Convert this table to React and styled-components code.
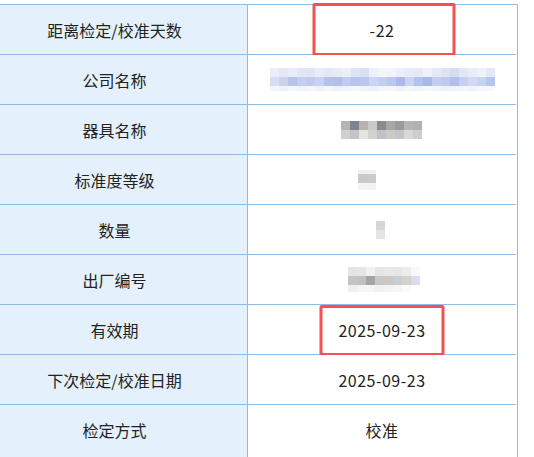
import React from "react";
import styled, { createGlobalStyle } from "styled-components";

const GlobalStyle = createGlobalStyle`
  html, body {
    margin: 0;
    padding: 0;
    background: #ffffff;
    overflow: hidden;
  }
  body {
    font-family: "Noto Sans CJK SC", "Noto Sans", sans-serif;
    color: #222;
  }
`;

const Page = styled.div`
  padding-top: 4px;
`;

const Table = styled.div`
  width: 535px;
  margin-left: -18px;
  border-top: 1px solid #8fbbe4;
  border-right: 1px solid #8fbbe4;
`;

const Row = styled.div`
  display: grid;
  grid-template-columns: 266px 268px;
`;

const Cell = styled.div`
  position: relative;
  display: flex;
  align-items: center;
  justify-content: center;
  height: 49px;
  font-size: 16px;
  line-height: 1;
  border-bottom: ${({ $last }) => ($last ? "none" : "1px solid #8fbbe4")};
  padding-bottom: ${({ $last }) => ($last ? "4px" : "0")};
`;

const Label = styled(Cell)`
  background: #e4f1fc;
  border-right: 1px solid #8fbbe4;
`;

const Value = styled(Cell)`
  background: #ffffff;
  letter-spacing: 0.5px;
`;

// red annotation box drawn over a value
const Highlight = styled.div`
  position: absolute;
  left: 50%;
  top: ${({ $top }) => $top}px;
  width: ${({ $w }) => $w}px;
  height: ${({ $h }) => $h}px;
  transform: translateX(-50%);
  margin-left: ${({ $dx }) => $dx || 0}px;
  border: 3px solid #f45252;
  border-radius: 2px;
  box-sizing: border-box;
  pointer-events: none;
`;

// pixelated (blurred) value
const Mosaic = styled.div`
  display: flex;
  flex-direction: column;
  margin-left: ${({ $dx }) => $dx || 0}px;
  filter: blur(0.3px);
`;

const MosaicRow = styled.div`
  display: flex;
  height: ${({ $h }) => $h}px;
`;

const Block = styled.div`
  width: 9px;
  height: 100%;
  background: ${({ $c }) => $c};
`;

const company = {
  heights: [9, 9, 5],
  rows: [
    ["#ebeef8", "#e4e8f6", "#e9ecf8", "#e2e7f6", "#dfe5f5", "#e8ecf8", "#e3e8f6", "#e7ebf8", "#eceff9", "#dde4f5", "#d9e0f3", "#eef1fa", "#f3f5fb", "#f2f4fb", "#eceff9", "#e9ecf8", "#e6eaf7", "#eff1fa", "#e5e9f7", "#dde3f5", "#d6ddf3", "#e2e7f6", "#eaedf8", "#f0f2fa", "#e4e8f6"],
    ["#d7def4", "#c9d3f0", "#b5c4ec", "#c3cef0", "#bfcbef", "#c9d2f0", "#b4c3ec", "#b0c0ea", "#c0ccef", "#b6c5ec", "#b9c7ed", "#ccd5f1", "#c4cff0", "#bcc9ee", "#a9bbea", "#cbd4f1", "#b2c2eb", "#a5b9ea", "#c2cdf0", "#bfcaef", "#b1c1eb", "#c6d0f0", "#d1d9f3", "#c8d2f1", "#b7c6ed"],
    ["#f3f5fb", "#eef1fa", "#f5f6fc", "#f1f3fb", "#f4f6fc", "#eff2fa", "#f6f7fc", "#eef1fa", "#f2f4fb", "#f7f8fd", "#f0f3fb", "#eef1fa", "#f3f5fb", "#f6f7fc", "#eff2fa", "#f4f6fc", "#f1f3fb", "#f7f8fd", "#f3f5fb", "#eef1fa", "#f2f4fb", "#f5f6fc", "#f0f3fb", "#f6f7fc", "#f8f9fd"],
  ],
};

const instrument = {
  heights: [9, 9],
  rows: [
    ["#b9b3ae", "#7d848d", "#b7b3b1", "#c9c9c9", "#878b90", "#a9a6a3", "#9b9b9f", "#b5b5b7", "#b1b1b3"],
    ["#d1d0cf", "#c4c4c8", "#e4e4e2", "#d5d1cf", "#c1c1c9", "#cdc9c5", "#c5c5c7", "#d8d8da", "#cdcdcd"],
  ],
};

const level = {
  heights: [4, 9, 7],
  rows: [
    ["#efefef", "#f1f1f3"],
    ["#c9c9ca", "#cacbcd"],
    ["#f3f3f3", "#f1f2f5"],
  ],
};

const quantity = {
  heights: [9, 9],
  rows: [["#d6d6d6"], ["#e3e3e3"]],
};

const serial = {
  heights: [9, 9, 7],
  rows: [
    ["#e4e4e4", "#e6e6e6", "#f1f1f1", "#e5e5e5", "#e8e8e8", "#e6e6e6", "#ececec", "#f8f8fa"],
    ["#c4c4c4", "#c1c1c1", "#a5a5a5", "#c8c8c8", "#cbc7c4", "#c9ccd4", "#d4d2cc", "#d9dde9"],
    ["#f0f0f0", "#f4f4f4", "#f6f6f6", "#f1f1f1", "#f3f3f3", "#f5f5f5", "#fafafa", "#ffffff"],
  ],
};

const Blurred = ({ data, dx }) => (
  <Mosaic $dx={dx}>
    {data.rows.map((row, i) => (
      <MosaicRow key={i} $h={data.heights[i]}>
        {row.map((c, j) => (
          <Block key={j} $c={c} />
        ))}
      </MosaicRow>
    ))}
  </Mosaic>
);

const rows = [
  { label: "距离检定/校准天数", value: "-22", mark: { top: -2, w: 143, h: 53, dx: 2 } },
  { label: "公司名称", blur: company },
  { label: "器具名称", blur: instrument, dx: -2 },
  { label: "标准度等级", blur: level, dx: -30 },
  { label: "数量", blur: quantity, dx: -3 },
  { label: "出厂编号", blur: serial, dx: 4 },
  { label: "有效期", value: "2025-09-23", mark: { top: 0, w: 125, h: 51, dx: 0 } },
  { label: "下次检定/校准日期", value: "2025-09-23" },
  { label: "检定方式", value: "校准" },
];

export default function App() {
  return (
    <Page>
      <GlobalStyle />
      <Table>
        {rows.map((r, i) => {
          const last = i === rows.length - 1;
          return (
            <Row key={r.label}>
              <Label $last={last}>{r.label}</Label>
              <Value $last={last}>
                {r.blur ? <Blurred data={r.blur} dx={r.dx} /> : r.value}
                {r.mark && (
                  <Highlight $top={r.mark.top} $w={r.mark.w} $h={r.mark.h} $dx={r.mark.dx} />
                )}
              </Value>
            </Row>
          );
        })}
      </Table>
    </Page>
  );
}
